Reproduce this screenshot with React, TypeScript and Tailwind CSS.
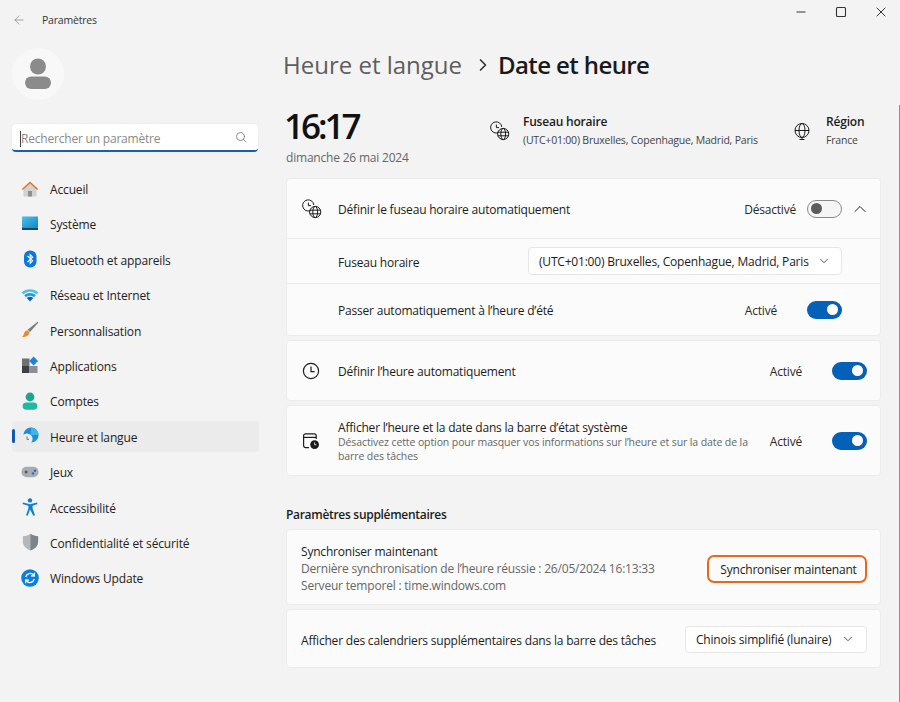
import React from 'react';
import { ArrowLeft, ChevronDown, ChevronRight, ChevronUp, Minus, Search, Square, X } from 'lucide-react';

const ClockGlobe = () => (
  <svg width="20" height="20" viewBox="0 0 20 20" fill="none" stroke="#1c1c1c" strokeWidth="1">
    <path d="M8.4 11.6A5.6 5.600 0 1 1 11.800 6" />
    <path d="M6.400 3.600v3h2.600" />
    <circle cx="13.200" cy="13" r="5.600" />
    <ellipse cx="13.200" cy="13" rx="2.400" ry="5.600" />
    <path d="M7.800 11.200h10.800M7.800 14.800h10.800" />
  </svg>
);

const Globe = () => (
  <svg width="18" height="18" viewBox="0 0 18 18" fill="none" stroke="#1c1c1c" strokeWidth="1">
    <circle cx="9" cy="8.500" r="7" />
    <ellipse cx="9" cy="8.500" rx="3" ry="7" />
    <path d="M2 8.500h14M9 15.500v2M6.500 17.500h5" />
  </svg>
);

const Clock = () => (
  <svg width="18" height="18" viewBox="0 0 18 18" fill="none" stroke="#1c1c1c" strokeWidth="1.200">
    <circle cx="9" cy="9" r="7.600" />
    <path d="M9 4.600V9.600H12.600" />
  </svg>
);

const CalendarClock = () => (
  <svg width="18" height="18" viewBox="0 0 18 18" fill="none" stroke="#1c1c1c" strokeWidth="1.200">
    <path d="M7 15.600H3.600a2 2 0 0 1-2-2V3.800a2 2 0 0 1 2-2h8.600a2 2 0 0 1 2 2V7" />
    <path d="M1.600 5.400h12.600" />
    <circle cx="12.600" cy="12.600" r="4.400" fill="#1c1c1c" stroke="none" />
    <path d="M12.600 10.400v2.400h1.800" stroke="#fbfbfb" strokeWidth="0.800" />
  </svg>
);

const HomeIcon = () => (
  <svg width="18" height="18" viewBox="0 0 18 18">
    <path d="M2.500 8.500 9 3l6.500 5.500V16.500h-13z" fill="#d2d2d2" />
    <path d="M7 11h4v5.500H7z" fill="#8f8f8f" />
    <path d="M.8 9 9 1.400 17.200 9l-1.100 1L9 3.600 1.900 10z" fill="#d9792b" />
  </svg>
);

const SystemIcon = () => (
  <svg width="18" height="15" viewBox="0 0 18 15">
    <defs>
      <linearGradient id="sys" x1="0" y1="0" x2="1" y2="1">
        <stop offset="0" stopColor="#4fc0e8" />
        <stop offset="1" stopColor="#1287c4" />
      </linearGradient>
    </defs>
    <rect x="1" y="0.500" width="16" height="11" fill="url(#sys)" />
    <rect x="1" y="11.500" width="16" height="2.500" fill="#17456b" />
  </svg>
);

const BluetoothIcon = () => (
  <svg width="18" height="18" viewBox="0 0 18 18">
    <rect x="3" y="0.500" width="12.500" height="17" rx="6" fill="#0a78d8" />
    <path d="m6.400 5.800 5.200 5-2.400 2.600V4.600l2.400 2.600-5.200 5" fill="none" stroke="#fff" strokeWidth="1.100" />
  </svg>
);

const WifiIcon = () => (
  <svg width="18" height="14" viewBox="0 0 18 14">
    <path d="M.6 4.400C5.400.2 12.600.2 17.400 4.400l-1.800 2C11.600 3 6.400 3 2.400 6.400z" fill="#4cc2ee" />
    <path d="M3.200 7.200c3.400-2.900 8.200-2.900 11.600 0l-1.800 2c-2.400-2-5.600-2-8 0z" fill="#1f9be0" />
    <path d="M5.800 10c1.900-1.600 4.500-1.600 6.400 0L9 13.600z" fill="#0b62b8" />
  </svg>
);

const BrushIcon = () => (
  <svg width="18" height="18" viewBox="0 0 18 18">
    <path d="M16.600.8 17.400 1.600 9 11 6.600 8.800z" fill="#7d7d7d" />
    <path d="M6.200 9.200 8.600 11.600C8 14.600 4.400 16.600.8 16c1.800-1 1.800-2.400 2.400-4 .5-1.400 1.600-2.400 3-2.800z" fill="#ea8a2e" />
  </svg>
);

const AppsIcon = () => (
  <svg width="18" height="18" viewBox="0 0 18 18">
    <rect x="1" y="2.500" width="7.500" height="7.500" fill="#6e7074" />
    <rect x="1" y="10" width="7.500" height="7" fill="#3d3f43" />
    <rect x="8.500" y="10" width="8" height="7" fill="#8c8e92" />
    <path d="m12.600.6 4.400 4.400-4.400 4.400L8.200 5z" fill="#1b86d8" />
  </svg>
);

const AccountIcon = () => (
  <svg width="18" height="18" viewBox="0 0 18 18">
    <circle cx="9" cy="5" r="4.400" fill="#1ea58f" />
    <rect x="1.600" y="10.400" width="14.800" height="7.400" rx="3.700" fill="#22b8a0" />
  </svg>
);

const TimeLangIcon = () => (
  <svg width="18" height="18" viewBox="0 0 18 18">
    <circle cx="10" cy="8" r="7.600" fill="#1b8fd6" />
    <path d="M10 .4a7.600 7.600 0 0 1 7.600 7.600H10z" fill="#3fb4ea" />
    <circle cx="6" cy="12" r="5.600" fill="#ececec" />
    <path d="M6 9.400V12.400H8" fill="none" stroke="#6a6a6a" strokeWidth="0.900" />
  </svg>
);

const GamesIcon = () => (
  <svg width="18" height="12" viewBox="0 0 18 12">
    <rect x="0.500" y="0.800" width="17" height="10.400" rx="5" fill="#a9adb3" />
    <path d="M3.600 6h3M5.100 4.500v3" stroke="#3c3f44" strokeWidth="1" />
    <circle cx="12" cy="7.400" r="1.200" fill="#1a6fc0" />
    <circle cx="14" cy="4.800" r="1.200" fill="#1a6fc0" />
  </svg>
);

const AccessIcon = () => (
  <svg width="16" height="18" viewBox="0 0 16 18">
    <circle cx="8" cy="2.400" r="2.200" fill="#0f7fd0" />
    <path d="M1 4.400 8 6.200l7-1.800.5 1.600-4.900 1.800v2.600l2.400 6.800-1.700.6L8 11.600l-2.300 6.200-1.700-.6 2.400-6.800V7.800L.5 6z" fill="#0f7fd0" />
  </svg>
);

const ShieldIcon = () => (
  <svg width="17" height="18" viewBox="0 0 17 18">
    <path d="M8.500.8c2 1.500 4.600 2.200 7.600 2.400v5.600c0 4-3 7-7.600 8.600C3.900 15.800.9 12.800.9 8.800V3.200C3.900 3 6.500 2.300 8.500.8z" fill="#b4b7bb" />
    <path d="M8.500.8c2 1.500 4.600 2.200 7.600 2.400v5.600c0 4-3 7-7.600 8.600z" fill="#7f8389" />
  </svg>
);

const UpdateIcon = () => (
  <svg width="18" height="18" viewBox="0 0 18 18">
    <circle cx="9" cy="9" r="8.800" fill="#0b80d8" />
    <path d="M4.800 8A4.400 4.400 0 0 1 12.600 6.200M13.200 10A4.400 4.400 0 0 1 5.400 11.800" fill="none" stroke="#fff" strokeWidth="1.300" />
    <path d="m13.400 3.800-.2 3.200-3.200-.2M4.600 14.200l.2-3.200 3.200.2" fill="none" stroke="#fff" strokeWidth="1.300" />
  </svg>
);

const navItems = [
  { label: 'Accueil', icon: <HomeIcon /> },
  { label: 'Système', icon: <SystemIcon /> },
  { label: 'Bluetooth et appareils', icon: <BluetoothIcon /> },
  { label: 'Réseau et Internet', icon: <WifiIcon /> },
  { label: 'Personnalisation', icon: <BrushIcon /> },
  { label: 'Applications', icon: <AppsIcon /> },
  { label: 'Comptes', icon: <AccountIcon /> },
  { label: 'Heure et langue', icon: <TimeLangIcon />, active: true },
  { label: 'Jeux', icon: <GamesIcon /> },
  { label: 'Accessibilité', icon: <AccessIcon /> },
  { label: 'Confidentialité et sécurité', icon: <ShieldIcon /> },
  { label: 'Windows Update', icon: <UpdateIcon /> },
];

const Toggle = ({ on, label }: { on: boolean; label: string }) => (
  <div className="flex items-center">
    <span className="pt-[3px] text-[12px] text-[#2a2a2a]">{label}</span>
    {on ? (
      <div className="ml-[30px] flex h-[18px] w-[35px] items-center justify-end rounded-full bg-[#0560b8] pr-[4px]">
        <div className="h-[11px] w-[11px] rounded-full bg-white" />
      </div>
    ) : (
      <div className="ml-[11px] flex h-[18px] w-[35px] items-center rounded-full border border-[#8a8a8a] bg-[#f6f6f6] pl-[3px]">
        <div className="h-[11px] w-[11px] rounded-full bg-[#5c5c5c]" />
      </div>
    )}
  </div>
);

const Card = ({ className, children }: { className: string; children: React.ReactNode }) => (
  <div className={`rounded-[4px] border border-[#ececec] bg-[#fbfbfb] ${className}`}>{children}</div>
);

export default function App() {
  return (
    <div className="relative flex h-[702px] w-[900px] overflow-hidden bg-[#f3f3f3] font-['Open_Sans','Noto_Sans',sans-serif] text-[12px] tracking-[-0.2px] text-[#1b1b1b]">
      {/* sidebar */}
      <aside className="w-[286px] shrink-0 pl-[12px]">
        <div className="flex h-[40px] items-center">
          <ArrowLeft size={14} strokeWidth={1.700} className="text-[#a0a0a0]" />
          <span className="ml-[16px] pt-[2px] text-[10.500px] text-[#333]">Paramètres</span>
        </div>
        <div className="mt-[8px] flex h-[52px] w-[52px] items-center justify-center rounded-full bg-[#f8f8f8]">
          <svg width="26" height="32" viewBox="0 0 26 32" fill="#8b8b8b">
            <circle cx="13" cy="8.500" r="8" />
            <rect y="18.500" width="26" height="12.500" rx="6.200" />
          </svg>
        </div>
        <div className="mt-[24px] flex h-[28px] w-[246px] items-center justify-between rounded-[4px] border-b-2 border-[#1a5fa8] bg-white pl-[8px] pr-[11px] shadow-[0_0_2px_rgba(0,0,0,0.08)]">
          <span className="mt-[3px] border-l border-[#444] leading-[16px] text-[#8a8a8a]">Rechercher un paramètre</span>
          <Search size={12} strokeWidth={1.700} className="text-[#777]" />
        </div>
        <nav className="mt-[21px] flex w-[247px] flex-col gap-[4.400px]">
          {navItems.map((item) => (
            <div
              key={item.label}
              className={`relative flex h-[31px] items-center rounded-[4px] pl-[9px] ${item.active ? 'bg-[#ebebeb]' : ''}`}
            >
              {item.active && <div className="absolute left-0 top-[8px] h-[14px] w-[3px] rounded-full bg-[#0f5bab]" />}
              <div className="mr-[11px] flex h-[18px] w-[18px] shrink-0 items-center justify-center">{item.icon}</div>
              <span className="pt-[3px] tracking-[-0.15px] text-[#222]">{item.label}</span>
            </div>
          ))}
        </nav>
      </aside>

      {/* main */}
      <main className="w-[595px] shrink-0">
        <div className="h-[40px]" />
        <div className="-ml-[3px] flex h-[50px] items-center text-[24px] tracking-normal">
          <span className="font-medium text-[#5e5e5e]">Heure et langue</span>
          <ChevronRight size={20} strokeWidth={2} className="ml-[11px] mr-[5px] text-[#333]" />
          <span className="font-semibold tracking-[-0.6px] text-[#1a1a1a]">Date et heure</span>
        </div>

        <div className="mt-[13px] flex h-[75px] items-start">
          <div className="w-[204px]">
            <div className="-ml-[2px] text-[35px] font-semibold leading-[46px] tracking-[-3px] text-[#111]">16:17</div>
            <div className="text-[#666]">dimanche 26 mai 2024</div>
          </div>
          <div className="mt-[10px] flex w-[303px] items-center">
            <ClockGlobe />
            <div className="ml-[13px]">
              <div className="font-semibold leading-[18px]">Fuseau horaire</div>
              <div className="text-[10.500px] leading-[18px] text-[#444]">(UTC+01:00) Bruxelles, Copenhague, Madrid, Paris</div>
            </div>
          </div>
          <div className="mt-[10px] flex items-center">
            <Globe />
            <div className="ml-[15px]">
              <div className="font-semibold leading-[18px]">Région</div>
              <div className="text-[10.500px] leading-[18px] text-[#444]">France</div>
            </div>
          </div>
        </div>

        <Card className="flex flex-col">
          <div className="flex h-[60px] items-center justify-between border-b border-[#ececec] pl-[15px] pr-[10px]">
            <div className="flex items-center">
              <ClockGlobe />
              <span className="ml-[16px] pt-[3px]">Définir le fuseau horaire automatiquement</span>
            </div>
            <div className="flex items-center">
              <Toggle on={false} label="Désactivé" />
              <ChevronUp size={20} strokeWidth={1.200} className="ml-[8px] text-[#222]" />
            </div>
          </div>
          <div className="flex h-[45px] items-center justify-between border-b border-[#ececec] pl-[51px] pr-[38px]">
            <span className="pt-[3px]">Fuseau horaire</span>
            <div className="flex h-[28px] w-[314px] items-center justify-between rounded-[4px] border border-[#e6e6e6] bg-white pl-[10px] pr-[10px]">
              <span className="pt-[2px]">(UTC+01:00) Bruxelles, Copenhague, Madrid, Paris</span>
              <ChevronDown size={14} strokeWidth={1.700} className="text-[#555]" />
            </div>
          </div>
          <div className="flex h-[51px] items-center justify-between pl-[51px] pr-[38px]">
            <span className="pt-[3px]">Passer automatiquement à l’heure d’été</span>
            <Toggle on label="Activé" />
          </div>
        </Card>

        <Card className="mt-[4px] flex h-[61px] items-center justify-between pl-[15px] pr-[13px]">
          <div className="flex items-center">
            <Clock />
            <span className="ml-[18px] pt-[3px]">Définir l’heure automatiquement</span>
          </div>
          <Toggle on label="Activé" />
        </Card>

        <Card className="mt-[4px] flex h-[71px] items-center justify-between pl-[15px] pr-[13px]">
          <div className="flex items-center">
            <CalendarClock />
            <div className="ml-[18px] w-[420px] pt-[2px]">
              <div className="leading-[15px]">Afficher l’heure et la date dans la barre d’état système</div>
              <div className="text-[10.500px] leading-[14px] tracking-[-0.1px] text-[#666]">
                Désactivez cette option pour masquer vos informations sur l’heure et sur la date de la barre des tâches
              </div>
            </div>
          </div>
          <Toggle on label="Activé" />
        </Card>

        <div className="mt-[30px] font-semibold leading-[18px] tracking-[-0.3px]">Paramètres supplémentaires</div>

        <Card className="mt-[5px] flex h-[76px] items-center justify-between pl-[14px] pr-[13px]">
          <div className="pt-[2px] leading-[17px]">
            <div>Synchroniser maintenant</div>
            <div className="text-[#666]">Dernière synchronisation de l’heure réussie : 26/05/2024 16:13:33</div>
            <div className="text-[#666]">Serveur temporel : time.windows.com</div>
          </div>
          <div className="mt-[4px] flex h-[28px] w-[160px] items-center justify-center rounded-[7px] border-2 border-[#e8691e] bg-[#fcfcfc] pl-[3px] pt-[1px]">
            Synchroniser maintenant
          </div>
        </Card>

        <Card className="mt-[4px] flex h-[59px] items-center justify-between pl-[14px] pr-[13px]">
          <span className="pt-[4px]">Afficher des calendriers supplémentaires dans la barre des tâches</span>
          <div className="mt-[1px] flex h-[27px] w-[182px] items-center justify-between rounded-[4px] border border-[#e6e6e6] bg-white pl-[10px] pr-[11px]">
            <span className="pt-[2px]">Chinois simplifié (lunaire)</span>
            <ChevronDown size={14} strokeWidth={1.700} className="text-[#555]" />
          </div>
        </Card>
      </main>

      {/* window controls */}
      <div className="absolute right-[-1px] top-[4px] flex text-[#333]">
        <div className="flex h-[16px] w-[40px] items-center justify-center"><Minus size={14} strokeWidth={1.700} /></div>
        <div className="flex h-[16px] w-[40px] items-center justify-center"><Square size={12} strokeWidth={2.200} /></div>
        <div className="flex h-[16px] w-[40px] items-center justify-center"><X size={16} strokeWidth={1.500} /></div>
      </div>
      <div className="absolute right-0 top-[105px] h-[597px] w-[1px] bg-[#8f8f8f]" />
    </div>
  );
}
